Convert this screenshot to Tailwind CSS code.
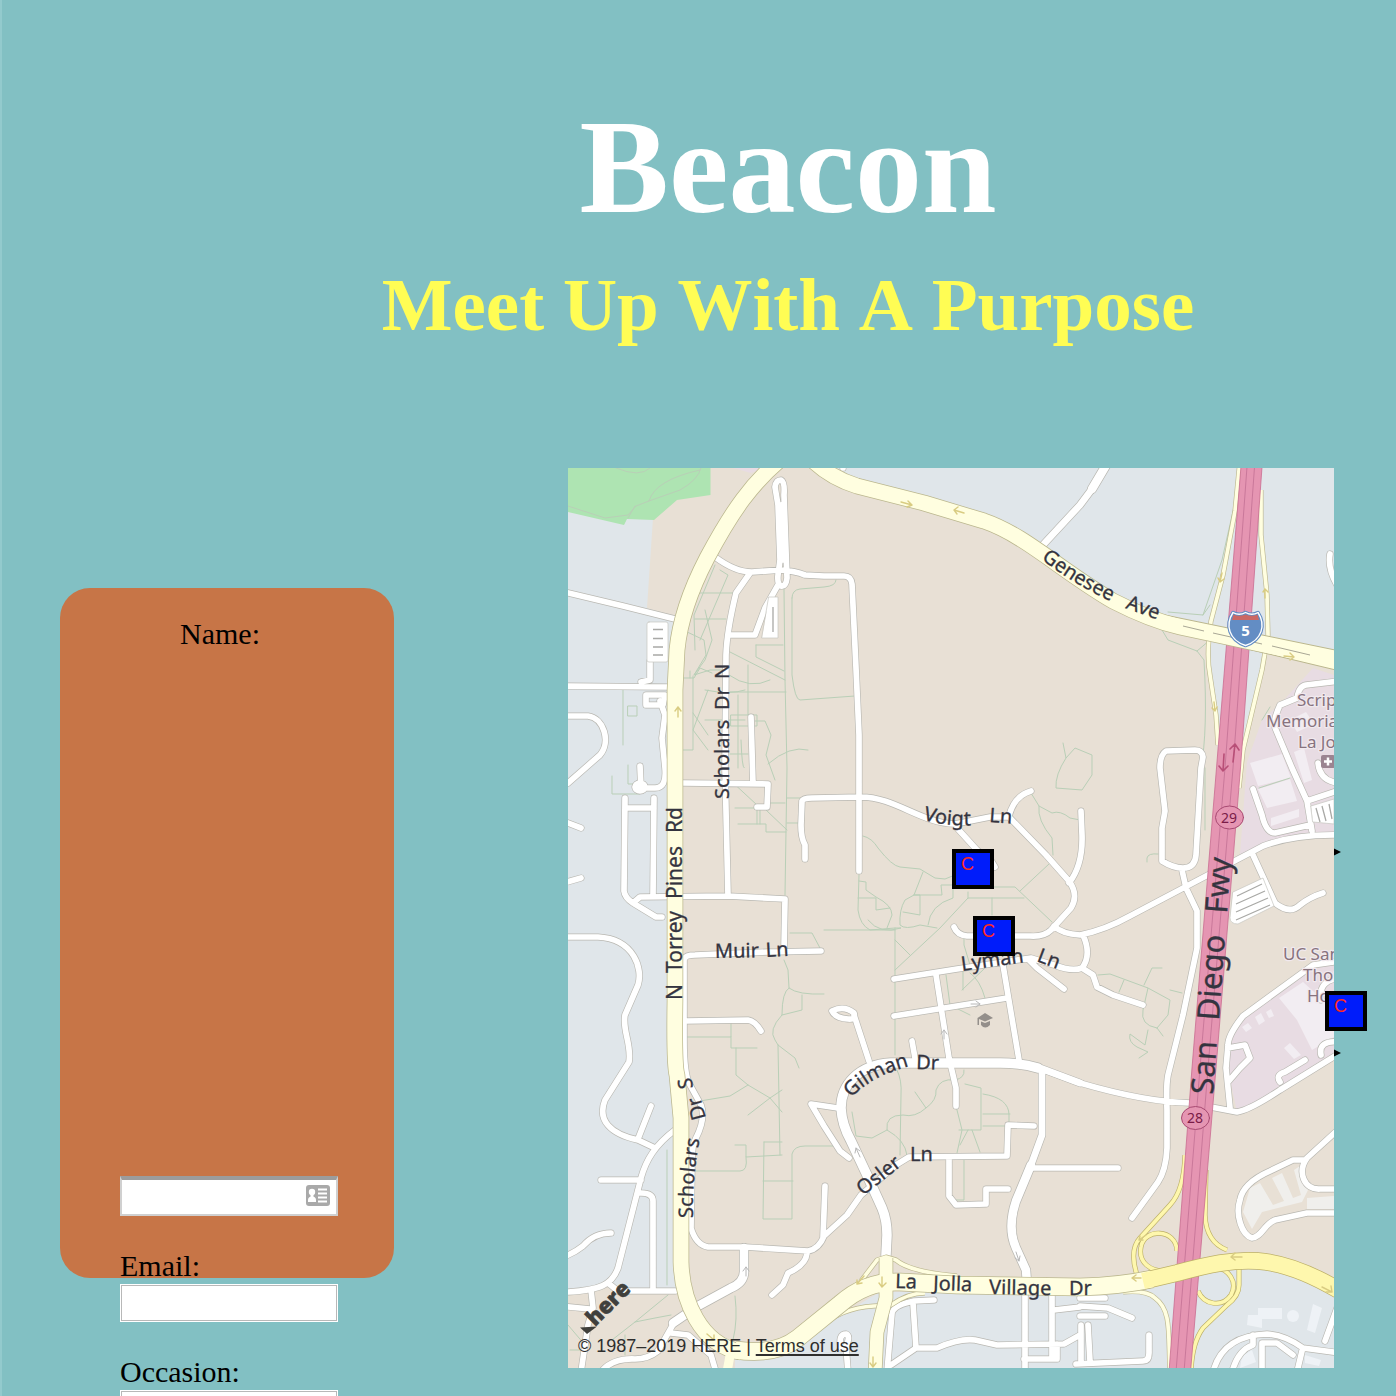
<!DOCTYPE html>
<html lang="en">
<head>
<meta charset="utf-8">
<meta name="viewport" content="width=device-width, initial-scale=1">
<title>Beacon</title>
<script src="https://cdn.jsdelivr.net/npm/@tailwindcss/browser@4"></script>
</head>
<body class="min-h-screen overflow-x-clip border-l-2 border-[#93cacd] bg-[#82c0c3] font-['Liberation_Serif',serif] text-black">
<header class="pt-[92px] pl-[178px] text-center font-bold [font-kerning:none]">
  <h1 class="text-[134px] leading-[150px] text-white">Beacon</h1>
  <h2 class="mt-[21px] text-[75px] leading-[84px] text-[#fffd54]">Meet Up With A Purpose</h2>
</header>

<main class="mt-[121px] flex items-start gap-[174px] pr-[62px] pl-[58px]">
  <aside class="mt-[120px] h-[690px] w-[334px] shrink-0 rounded-[30px] bg-[#c77547]">
    <form class="flex flex-col gap-[33px] px-[60px] pt-[29px] text-[30px] leading-[33px]">
      <div class="flex flex-col gap-[524px]">
        <label for="name" class="pb-0.5 pl-[60px]">Name:</label>
        <div class="relative w-[218px]">
          <input id="name" type="text" class="block h-10 w-full border-2 border-t-4 border-[#d0d0d0] border-t-[#9c9c9c] bg-white px-2 font-['Liberation_Sans',sans-serif] text-xl">
          <svg class="absolute top-[9px] right-2 h-[21px] w-6" viewBox="0 0 24 21" aria-hidden="true">
            <rect width="24" height="21" rx="3" fill="#a9a9a9"/>
            <circle cx="6" cy="7" r="3.2" fill="#fff"/>
            <path d="M4.500 9h3v3h-3zM2 17v-2q0-3 3-3.500h2q3 .5 3 3.500v2z" fill="#fff"/>
            <path d="M12 4.500h9M12 8.500h9M12 12.500h9M12 16.500h9" stroke="#fff" stroke-width="2"/>
          </svg>
        </div>
      </div>
      <div class="flex flex-col">
        <label for="email" class="pb-0.5">Email:</label>
        <input id="email" type="email" class="block h-[38px] w-[218px] border border-white bg-white px-2 font-['Liberation_Sans',sans-serif] text-xl inset-ring inset-ring-[#b8b8b8]">
      </div>
      <div class="flex flex-col">
        <label for="occasion" class="pb-0.5">Occasion:</label>
        <input id="occasion" type="text" class="block h-[38px] w-[218px] border border-white bg-white px-2 font-['Liberation_Sans',sans-serif] text-xl inset-ring inset-ring-[#b8b8b8]">
      </div>
    </form>
  </aside>

  <section class="relative h-[900px] min-w-0 flex-1" aria-label="Map">
    <svg class="block h-full w-full" viewBox="568 468 766 900" preserveAspectRatio="xMidYMid slice" fill="none" stroke-linejoin="round" stroke-linecap="round">
      <defs>
        <path id="narrow" d="M560,591L623,606L675,619M560,686L668,687M650,661V680L641,682M560,716H588C604,718 611,742 600,755L568,783M646,695H665L663,705H646ZM660,701L665,715L662,738L665,768Q667,788 655,788H641L640,766M635,787a5,4 0 1 0 10,0a5,4 0 1 0 -10,0M715,557Q735,572 752,572L781,570Q795,571 805,575L824,576H844Q851,576 852,584L856,668L859,735V871M750,573L736,593Q727,630 726,655L725,768L728,896M775,487Q776,480 781,480Q785,482 784,495L787,578Q786,587 781,586Q777,584 778,575L780,560L778,505ZM781,505L783,560M778,585L765,608L755,635H730M751,717L753,784M683,783L768,784L767,807H757M625,798L624,891Q625,898 633,903L656,917H662M654,798L653,896M625,808H654M633,903L640,897L728,896L785,899L784,950M685,958Q686,955 695,955L768,952L821,951M684,958V1040Q684,1075 690,1085L701,1105Q706,1118 696,1138Q692,1145 692,1160L691,1228Q696,1245 708,1247H745L808,1251Q819,1249 824,1236L847,1215L861,1195L896,1165L909,1157L1007,1156L1008,1125L1034,1126M685,1021L748,1020Q755,1021 761,1031M560,820L581,828M560,884L581,878M560,937H598C635,939 643,970 638,985L625,1015C622,1030 632,1045 629,1062L605,1100C597,1120 610,1134 638,1140L655,1148M651,1106L638,1139M601,1180H641M641,1193Q653,1193 653,1201V1290M675,1130C655,1145 646,1160 641,1178L618,1268C612,1285 600,1290 568,1292M608,1283L618,1291H675M560,1258Q573,1254 583,1246Q594,1233 611,1233M591,1290L593,1308L588,1325L581,1372M560,1306L590,1309M671,1333L688,1335L711,1355L716,1372M675,1321L658,1351Q648,1359 635,1359Q612,1358 601,1372M807,1253Q806,1265 788,1273L783,1285L772,1295M825,1186L823,1238M805,859V845Q801,838 801,825L802,801Q803,798 812,798L861,797C895,797 920,823 955,824L990,817H1009L1046,855L1069,881Q1079,895 1071,908L1051,930Q1044,937 1030,936H967Q957,935 954,927M1009,816Q1014,796 1031,791M957,828L977,850L992,862L995,867M1081,811L1082,835Q1083,865 1069,883M1054,926Q1062,934 1080,935Q1105,930 1130,916L1187,886L1263,846Q1295,834 1340,835M1083,935Q1092,955 1082,968M894,979L957,969L1031,958L1054,965Q1072,972 1082,968L1093,975L1097,987L1113,995L1143,1005M1029,960L1037,968L1064,989M894,1016L1007,998M936,975L949,1058L956,1088V1106M1003,965L1019,1060M912,1041L915,1058M832,1011Q844,1005 854,1013Q856,1020 848,1019Q835,1018 832,1011M854,1015L869,1061M838,1108L811,1104L824,1126L840,1151L849,1158M1032,1168H1118M949,1158V1196L956,1205L986,1204V1189H1008M934,1300L914,1301Q894,1305 892,1313L887,1372M913,1303L916,1348L891,1365M916,1348H937Q960,1338 975,1340L997,1345L1064,1344L1080,1335M1025,1292V1372M1052,1296V1358M1054,1310L1080,1307M1024,1359H1057V1344M841,1348Q838,1334 846,1334Q851,1336 846,1346L848,1372M1076,1364L1143,1361Q1149,1361 1149,1353V1335M1080,1298H1105M1080,1306L1108,1308L1132,1318M1080,1316H1105M1088,1325L1090,1361M1081,1325V1361M1213,1372C1220,1345 1240,1335 1267,1334Q1285,1335 1303,1348L1340,1353M1232,1372Q1238,1350 1253,1345V1335M1262,1372V1343H1277L1293,1355M1302,1351L1297,1372M1340,1300L1325,1341M1340,1128L1307,1158C1297,1172 1304,1190 1320,1189H1340M1305,1160H1293L1270,1171Q1243,1183 1240,1200C1235,1215 1242,1235 1252,1238C1262,1237 1264,1224 1275,1220L1307,1213H1340M1160,768L1165,811L1162,828V861Q1173,868 1183,868Q1195,868 1196,855L1201,768L1203,757Q1202,750 1195,750L1166,751Q1160,755 1160,768M1182,870L1186,888L1197,911V948L1183,1015L1168,1075Q1166,1085 1167,1110V1148Q1166,1170 1158,1182L1132,1218M1253,855L1275,903Q1290,915 1300,905Q1310,897 1323,893M1253,789L1262,815Q1266,833 1275,833L1310,825M1312,831L1307,801L1292,768L1276,730Q1272,722 1280,705L1297,698Q1299,686 1306,685L1340,681M1307,801L1340,790M1340,590Q1327,570 1330,554M1318,763Q1320,782 1340,783M1340,961L1313,965L1243,1016Q1228,1035 1228,1045L1226,1068L1230,1108M1228,1048L1245,1045L1250,1058L1240,1068L1228,1082M1280,1082Q1275,1075 1285,1072L1305,1060M1340,1042Q1318,1040 1321,1055M1042,1069L1080,1083Q1145,1102 1190,1103L1237,1112Q1250,1110 1280,1090L1340,1053M843,460V468M1340,978Q1318,980 1321,1000"/>
        <path id="wide" d="M744,1248V1270Q745,1282 731,1288L698,1306L673,1323M1031,1165L1016,1201Q1007,1228 1016,1248L1026,1270L1027,1284M1092,489L1108,462"/>
        <path id="medium" d="M1042,1071V1135L1031,1165M1042,546L1080,505L1092,489M1040,1068L1080,1083"/>
        <path id="gilman" d="M1038,1068Q1022,1063 1000,1063H891C858,1065 841,1085 841,1108Q842,1125 851,1141L867,1175L882,1208Q887,1220 887,1235L886,1255"/>
        <path id="ramps" d="M1240,460L1235,511L1223,575L1211,621Q1206,655 1210,675L1216,715L1218,745M1261,490V535L1267,595L1268,635L1262,670L1243,750L1239,788M861,1281L877,1260L886,1257L896,1260Q910,1272 957,1276M820,1328Q840,1308 874,1306L891,1305Q908,1293 925,1293M1123,1292Q1147,1290 1155,1298C1172,1310 1168,1335 1170,1372"/>
        <path id="loops" d="M1185,1155Q1184,1190 1170,1205L1140,1238Q1129,1250 1137,1275M1177,1251C1176,1228 1144,1228 1141,1247C1138,1262 1150,1272 1167,1271M1206,1170L1205,1215Q1206,1242 1227,1250M1198,1291C1204,1305 1222,1308 1231,1295C1238,1282 1229,1268 1213,1267M1239,1265V1285Q1239,1296 1227,1305L1203,1328Q1192,1343 1191,1372"/>
        <path id="torrey" d="M790,452C752,480 730,515 707,558Q681,608 677,650L675,690V1001Q674,1065 677,1075L681,1118V1262C682,1300 700,1345 741,1352"/>
        <path id="jolla" d="M735,1350Q775,1356 798,1338L840,1304C860,1286 880,1281 900,1282L957,1285L1080,1287Q1120,1286 1152,1279"/>
        <path id="genesee" d="M805,452Q825,476 857,486L924,503L984,521C1025,535 1060,570 1113,601Q1150,620 1180,627L1340,661"/>
        <path id="village" d="M1143,1281L1177,1273C1240,1256 1275,1252 1340,1291"/>
        <path id="south" d="M886,1258V1298L877,1332L875,1374"/>
        <path id="gen-line" d="M1041,559Q1078,588 1122,606"/>
        <path id="voigt-line" d="M923,820Q947,827 980,825"/>
        <path id="gilman-line" d="M851,1098Q872,1076 910,1066"/>
        <path id="scholars-line" d="M693,1218Q692,1175 701,1132"/>
      </defs>

      <path fill="#e8e0d5" d="M568,468h766v900H568z"/>
      <g fill="#e0e6ea">
        <path d="M568,500L653,518L647,608L677,618V1291H618L608,1284L568,1293Z"/>
        <path d="M805,460L857,486L984,521L1042,550L1113,601L1334,660V460Z"/>
        <path d="M1208,636H1268L1238,790L1217,745Z"/>
        <path d="M735,1368V1354L781,1356L824,1325L880,1292L1140,1290L1240,1263L1290,1272L1334,1296V1368Z"/>
      </g>
      <path fill="#aee4b2" d="M568,468H710.500V495L677,500L654,520L627,519L624,525L568,512Z"/>
      <g fill="#e8dce3">
        <path d="M733,468H765L751,473Z"/>
        <path d="M1313,668L1334,675V834L1300,836L1270,845L1240,854L1247,762L1262,720L1284,700Z"/>
        <path d="M1313,965L1334,961V1057L1280,1090L1237,1112L1228,1070V1041L1243,1016Z"/>
      </g>
      <g fill="#f2edf2">
        <path d="M1250,763L1282,754L1291,778L1258,786ZM1258,789L1290,779L1297,801L1267,808ZM1271,818L1299,809V817L1271,826ZM1290,720L1306,712L1314,724L1297,732ZM1294,752L1304,748L1312,780L1304,783Z"/>
        <path d="M1279,998L1303,982L1334,1010V1037L1312,1050L1297,1020ZM1242,1027L1248,1023L1252,1028L1246,1032ZM1255,1017L1261,1013L1265,1021L1259,1025ZM1266,1012L1271,1009L1274,1016L1269,1018ZM1284,1048L1290,1043L1301,1055L1294,1059Z"/>
        <path fill="#f0efec" d="M1250,1188L1260,1183L1273,1205L1284,1201L1272,1178L1282,1173L1293,1198L1301,1195L1294,1170L1300,1166L1308,1190L1302,1202L1262,1212L1252,1229L1243,1212ZM1307,1198L1334,1196V1209H1307Z"/>
        <path fill="#eef2f6" d="M1258,1308H1282V1319H1262V1328L1247,1325L1248,1315H1258ZM1313,1304L1322,1308L1315,1333L1307,1330ZM1242,1356L1252,1350L1256,1362L1240,1368ZM1305,1355L1321,1360L1319,1366L1305,1363Z"/>
        <circle cx="1293" cy="1316" r="6" fill="#eef2f6"/>
      </g>

      <g stroke="#b9cfb7" stroke-width="1">
        <path d="M568,506L605,518L628,515L636,506L649,501Q655,480 700,470M649,501L680,490Q698,480 701,468M616,468Q640,478 650,468M635,506L628,518"/>
        <path d="M715,565L694,615L695,650M720,570L728,575L700,640M696,593H733M695,619H726M705,610L712,640L705,660L694,675M683,630L704,640L706,655L694,675L710,670H725M693,676V750H683M708,690L693,730L708,750M693,713L708,735M705,720H745M730,652L785,680M784,588L785,680L787,768L785,895M792,598V675Q795,700 800,700L855,696M792,598Q792,590 800,589L824,587Q836,586 836,580M756,645H783M756,645V657L784,671M748,665V715M729,675Q750,690 770,680M730,692H786M731,715H757V726H731ZM738,695V768M741,740Q742,768 744,768M755,721H765L771,735L766,755L775,780M768,764Q790,745 808,750M730,754H748M705,690Q730,695 745,690M683,678H694L700,668L712,673M690,671V678"/>
        <path d="M735,808H757M738,824H766V832H786M757,810V824M760,810V824M768,803H785M766,810L787,830M787,798H800M787,823H798M730,780L757,805M790,933H812L820,948M784,960L788,970L789,988Q798,995 824,994M789,988Q782,992 782,1015Q768,1030 775,1040L778,1045L795,1058L799,1068M782,1015L802,1010V995M687,1037H731V1024M731,1037V1048H757M736,1048V1075L748,1085L770,1098L782,1112M778,1045L780,1155M700,1101L730,1096L748,1085M748,1115L770,1098L782,1090M782,1155L746,1157V1145H735M746,1157Q748,1171 740,1171H696M764,1142H782M764,1142L763,1219H792V1154Q794,1146 805,1146H837M763,1181H793M735,1296Q738,1320 733,1340M668,1295L635,1322L612,1340M635,1322L655,1318L671,1315M667,1150V1285M568,1325L585,1345M570,1350H583M625,1335V1355"/>
        <path d="M859,875L858,910Q860,925 870,930L895,928L901,928Q880,935 868,920M859,881L866,882V890L876,897Q892,905 892,915L887,928M858,898H876V910L890,908M895,928V1055M824,930H895M895,970L940,928L968,898H1024M863,836Q872,838 878,848Q892,866 900,867L920,869L935,878L945,879L955,875M923,872L914,895L905,900Q899,910 900,925Q905,930 920,925L937,928M914,895H920V915L903,912M914,895L942,895L941,885H955M928,925Q930,905 953,898V887H1015L1052,922M1020,891L1049,864M992,898V915M895,940L910,955M968,892V898M946,975L950,1005L970,1015M963,970V990M970,973Q980,980 985,998M962,990L985,968M964,938V945L970,965M895,1060H945"/>
        <path d="M1063,743L1066,758L1075,748L1092,755V775L1082,790L1056,788Q1055,775 1066,758M1031,793L1039,806Q1037,820 1052,838L1053,855M1039,806L1052,813Q1060,810 1070,818L1080,820M1098,975L1110,974L1148,988L1143,1010Q1140,1025 1157,1028L1163,1036M1148,988L1170,1000L1168,1015L1157,1028M1124,980L1119,992M1144,985L1152,968H1162M1148,1030L1145,1045L1130,1034Q1128,1042 1137,1047L1148,1052L1139,1058M1170,990L1182,993M1147,862V858Q1148,853 1158,854M897,1070Q902,1080 901,1095L900,1155M915,1092L926,1108Q937,1100 936,1090Q940,1078 955,1080Q965,1078 964,1070M926,1108Q915,1118 903,1115Q885,1115 887,1130Q905,1140 907,1155M887,1130L872,1138L856,1136L852,1112M956,1106L962,1130L957,1153M959,1130H981V1088L965,1084M983,1094Q1009,1098 1009,1115V1126M983,1114H1010M983,1126H1005M968,1130L960,1145M972,1130L980,1152M964,1160V1200H955M1201,768Q1208,730 1204,660L1197,651L1168,640L1162,630M1197,651L1210,640M1203,615L1222,560L1240,480M1168,612L1203,615L1210,605M1205,768V830M1270,707L1262,720M1259,788L1290,778"/>
        <path d="M623,690V745M628,706H637V716H628ZM612,776V794H640V784H628V765"/>
      </g>

      <g>
        <use href="#narrow" stroke="#b9b8b2" stroke-width="7"/>
        <use href="#medium" stroke="#b9b8b2" stroke-width="8"/>
        <use href="#wide" stroke="#b9b8b2" stroke-width="10"/>
        <use href="#gilman" stroke="#b9b8b2" stroke-width="11"/>
        <use href="#narrow" stroke="#fff" stroke-width="5.700"/>
        <use href="#medium" stroke="#fff" stroke-width="6.700"/>
        <use href="#wide" stroke="#fff" stroke-width="8.500"/>
        <use href="#gilman" stroke="#fff" stroke-width="9.500"/>
      </g>
      <g fill="#fff" stroke="#c6c5c0" stroke-width=".7">
        <rect x="647" y="622" width="21" height="40" rx="2"/>
        <path d="M769,597H778V638H762Z"/>
        <path d="M1233,892L1263,878L1274,906L1238,924Q1230,924 1230,918Z"/>
        <path d="M1311,806L1334,799V824L1313,822Z"/>
      </g>
      <g stroke="#a9a9a6" stroke-width="1.300" stroke-linecap="butt">
        <path d="M653,629.500h10M653,638.500h10M653,647h10M653,655h10M773,607v25M1237,896l25,-12M1236,904l29,-13M1236,912l32,-14M1236,920l34,-15M1316,808l4,14M1322,806l4,15M1329,804l3,15"/>
      </g>

      <g stroke-linecap="butt">
        <use href="#ramps" stroke="#bdb890" stroke-width="5"/>
        <use href="#loops" stroke="#bdb068" stroke-width="5"/>
        <use href="#ramps" stroke="#fffee0" stroke-width="3.700"/>
        <use href="#loops" stroke="#fef7ad" stroke-width="3.700"/>
        <path fill="#e595b2" stroke="#c96c91" stroke-width=".8" d="M1241.500,460H1262.500L1240.500,768L1216,1068L1190.500,1372H1169L1192,1068L1216.500,768Z"/>
        <path stroke="#c9789a" d="M1247.500,460L1225,768L1200,1068L1176,1372M1255,460L1233,768L1208,1068L1184,1372"/>
        <use href="#torrey" stroke="#bbb78e" stroke-width="16.500"/>
        <use href="#jolla" stroke="#bbb78e" stroke-width="18.500"/>
        <use href="#genesee" stroke="#bbb78e" stroke-width="16.500"/>
        <use href="#south" stroke="#bbb78e" stroke-width="14.500"/>
        <use href="#village" stroke="#bdb068" stroke-width="17.500"/>
        <path d="M731,1350L727,1372" stroke="#fffee0" stroke-width="9"/>
        <use href="#torrey" stroke="#fffee0" stroke-width="15"/>
        <use href="#jolla" stroke="#fffee0" stroke-width="17"/>
        <path d="M1160,614L1340,651V671L1160,628Z" fill="#fffee0" stroke="#bbb78e"/>
        <use href="#genesee" stroke="#fffee0" stroke-width="15"/>
        <use href="#south" stroke="#fffee0" stroke-width="13"/>
        <use href="#village" stroke="#fef7ad" stroke-width="16"/>
        <path stroke="#a9a795" d="M1183,626L1204,631M1213,633L1262,644M1272,646L1310,655"/>
      </g>

      <g stroke="#d9cc82" stroke-width="1.400">
        <path d="M901,502l11,3m-4,-4l4,4l-5,2M964,513l-10,-3m4,-3l-4,3l3,4M678,717v-10m-3,4l3,-4l3,4M1284,656l10,1m-4,-4l4,4l-4,3M1222,573l-2,9m-2,-4l2,4l4,-3M1265,598v-9m-2,3l2,-3l3,3M1214,702l1,9m-3,-3l3,3l2,-4M882,1277v10m-3,-4l3,4l4,-4M873,1357v10m-3,-4l3,4l3,-4M864,1276l-7,8v-4m0,4l5,-1M1242,1257h-11m4,-4l-4,4l4,3M1141,1278h-9m4,-3l-4,3l4,3M1322,1287l10,5m-1,-6l1,6h-6M707,1334l7,6v-5m0,5h-5M1146,1235l-7,5m1,-4l-1,4h4"/>
      </g>
      <g stroke="#b8b8b8">
        <path d="M944,1039v-9m-3,4l3,-4l3,4M971,1004h9m-4,-3l4,3l-4,3M746,1276v-9m-3,4l3,-4l3,4M1016,1252l3,9m-4,-3l4,3l1,-5M860,1157l-4,-9m-1,5l1,-5l4,3"/>
      </g>
      <path stroke="#b84f77" stroke-width="1.600" d="M1233,762l2,-18m-5,5l5,-5l4,6M1224,754l-1,17m-4,-5l4,5l5,-5"/>

      <g fill="#34343f" stroke="#34343f" stroke-width=".3" font-family="Noto Sans, Open Sans, sans-serif" font-size="20">
        <text><textPath href="#gen-line">Genesee</textPath></text>
        <text transform="translate(1125 608) rotate(20)">Ave</text>
        <text><textPath href="#voigt-line">Voigt</textPath></text>
        <text transform="translate(989 822) rotate(4)">Ln</text>
        <text transform="translate(962 971) rotate(-8)">Lyman</text>
        <text transform="translate(1036 961) rotate(21)">Ln</text>
        <text transform="translate(715 958) rotate(-1)">Muir</text>
        <text transform="translate(766 957) rotate(-3)">Ln</text>
        <text transform="translate(729 799) rotate(-90)">Scholars</text>
        <text transform="translate(729 710) rotate(-90)">Dr</text>
        <text transform="translate(729 679) rotate(-90)">N</text>
        <g font-size="21">
          <text transform="translate(682 1000) rotate(-90)">N</text>
          <text transform="translate(682 973) rotate(-90)">Torrey</text>
          <text transform="translate(682 899) rotate(-90)">Pines</text>
          <text transform="translate(682 833) rotate(-90)">Rd</text>
        </g>
        <text><textPath href="#scholars-line">Scholars</textPath></text>
        <text transform="translate(706 1118) rotate(-105)">Dr</text>
        <text transform="translate(693 1088) rotate(-98)">S</text>
        <text><textPath href="#gilman-line">Gilman</textPath></text>
        <text transform="translate(916 1069) rotate(2)">Dr</text>
        <text transform="translate(863 1196) rotate(-38)">Osler</text>
        <text transform="translate(910 1161)">Ln</text>
        <text transform="translate(895 1288) rotate(2)">La</text>
        <text transform="translate(933 1290) rotate(2)">Jolla</text>
        <text transform="translate(989 1294) rotate(1)">Village</text>
        <text transform="translate(1069 1295)">Dr</text>
        <g font-size="31">
          <text transform="translate(1213 1095) rotate(-86)">San</text>
          <text transform="translate(1219 1021) rotate(-86)">Diego</text>
          <text transform="translate(1227 914) rotate(-86)">Fwy</text>
        </g>
      </g>

      <g fill="#87737e" stroke="#f1e9ee" stroke-width="2.500" paint-order="stroke" font-family="Noto Sans, Open Sans, sans-serif" font-size="17">
        <text x="1297" y="706">Scripps</text>
        <text x="1266" y="727">Memorial</text>
        <text x="1298" y="748">La Jolla</text>
        <text x="1283" y="960">UC San</text>
        <text x="1303" y="981">Thornton</text>
        <text x="1307" y="1002">Hospital</text>
      </g>
      <rect x="1321" y="755" width="14" height="13" rx="2" fill="#9b8491"/>
      <path d="M1328,757.500v8M1324,761.500h8" stroke="#fff" stroke-width="2.500" stroke-linecap="butt"/>
      <path fill="#948f8b" d="M985,1013L993,1018L985,1021.500L979,1019V1025H977.500V1018ZM981,1021.500L985,1023L990,1021V1025Q985,1030 981,1025Z"/>

      <g font-family="Noto Sans, Open Sans, sans-serif" font-size="14" text-anchor="middle" fill="#7a1c48">
        <ellipse cx="1229.500" cy="817.500" rx="14" ry="11.500" fill="#e595b2" stroke="#a84a72"/>
        <text x="1229" y="823">29</text>
        <ellipse cx="1195.500" cy="1118" rx="14" ry="11.500" fill="#e595b2" stroke="#a84a72"/>
        <text x="1195" y="1123">28</text>
      </g>
      <path fill="#638dc4" stroke="#638dc4" stroke-width="3.500" d="M1233,612.500Q1239,616 1245.500,612.500Q1252,616 1258,612.500C1266,625 1262,640 1245.500,645.500C1229,640 1225,625 1233,612.500Z"/>
      <path fill="#638dc4" stroke="#fff" stroke-width="1.400" d="M1233,612.500Q1239,616 1245.500,612.500Q1252,616 1258,612.500C1266,625 1262,640 1245.500,645.500C1229,640 1225,625 1233,612.500Z"/>
      <path fill="#cb6864" d="M1233.500,614.500Q1239,617 1245.500,614.500Q1252,617 1257.500,614.500L1259,620H1232Z"/>
      <text x="1245.500" y="636" fill="#fff" font-family="Noto Sans, Open Sans, sans-serif" font-size="15" font-weight="700" text-anchor="middle">5</text>

      <text transform="translate(595 1327) rotate(-45)" fill="#40403c" stroke="#40403c" stroke-width=".6" font-family="Open Sans, Noto Sans, sans-serif" font-size="22" font-weight="800">here</text>
      <path fill="#40403c" d="M580,1327.500L597,1326.500L587,1334Z"/>
    </svg>

    <p class="absolute bottom-[11px] left-2.5 font-['Liberation_Sans',sans-serif] text-lg leading-[22px] whitespace-nowrap text-[#2e2e2e]">© 1987–2019 HERE | <a href="#terms" class="underline decoration-2 underline-offset-2">Terms of use</a></p>

    <button type="button" class="absolute top-[381px] left-[384px] flex h-10 w-[42px] items-start border-4 border-black bg-[#001cfa] pl-[5px] font-['Liberation_Sans',sans-serif] text-lg leading-[22px] text-[#ff2a1c]">C</button>
    <button type="button" class="absolute top-[448px] left-[405px] flex h-10 w-[42px] items-start border-4 border-black bg-[#001cfa] pl-[5px] font-['Liberation_Sans',sans-serif] text-lg leading-[22px] text-[#ff2a1c]">C</button>
    <button type="button" class="absolute top-[523px] -right-[33px] flex h-10 w-[42px] items-start border-4 border-black bg-[#001cfa] pl-[5px] font-['Liberation_Sans',sans-serif] text-lg leading-[22px] text-[#ff2a1c]">C</button>
    <svg class="absolute top-[380px] left-full h-2 w-[7px]" viewBox="0 0 7 8" aria-hidden="true"><path d="M0,.5L7,4L0,7.500z"/></svg>
    <svg class="absolute top-[581px] left-full h-2 w-[7px]" viewBox="0 0 7 8" aria-hidden="true"><path d="M0,.5L7,4L0,7.500z"/></svg>
  </section>
</main>
</body>
</html>
